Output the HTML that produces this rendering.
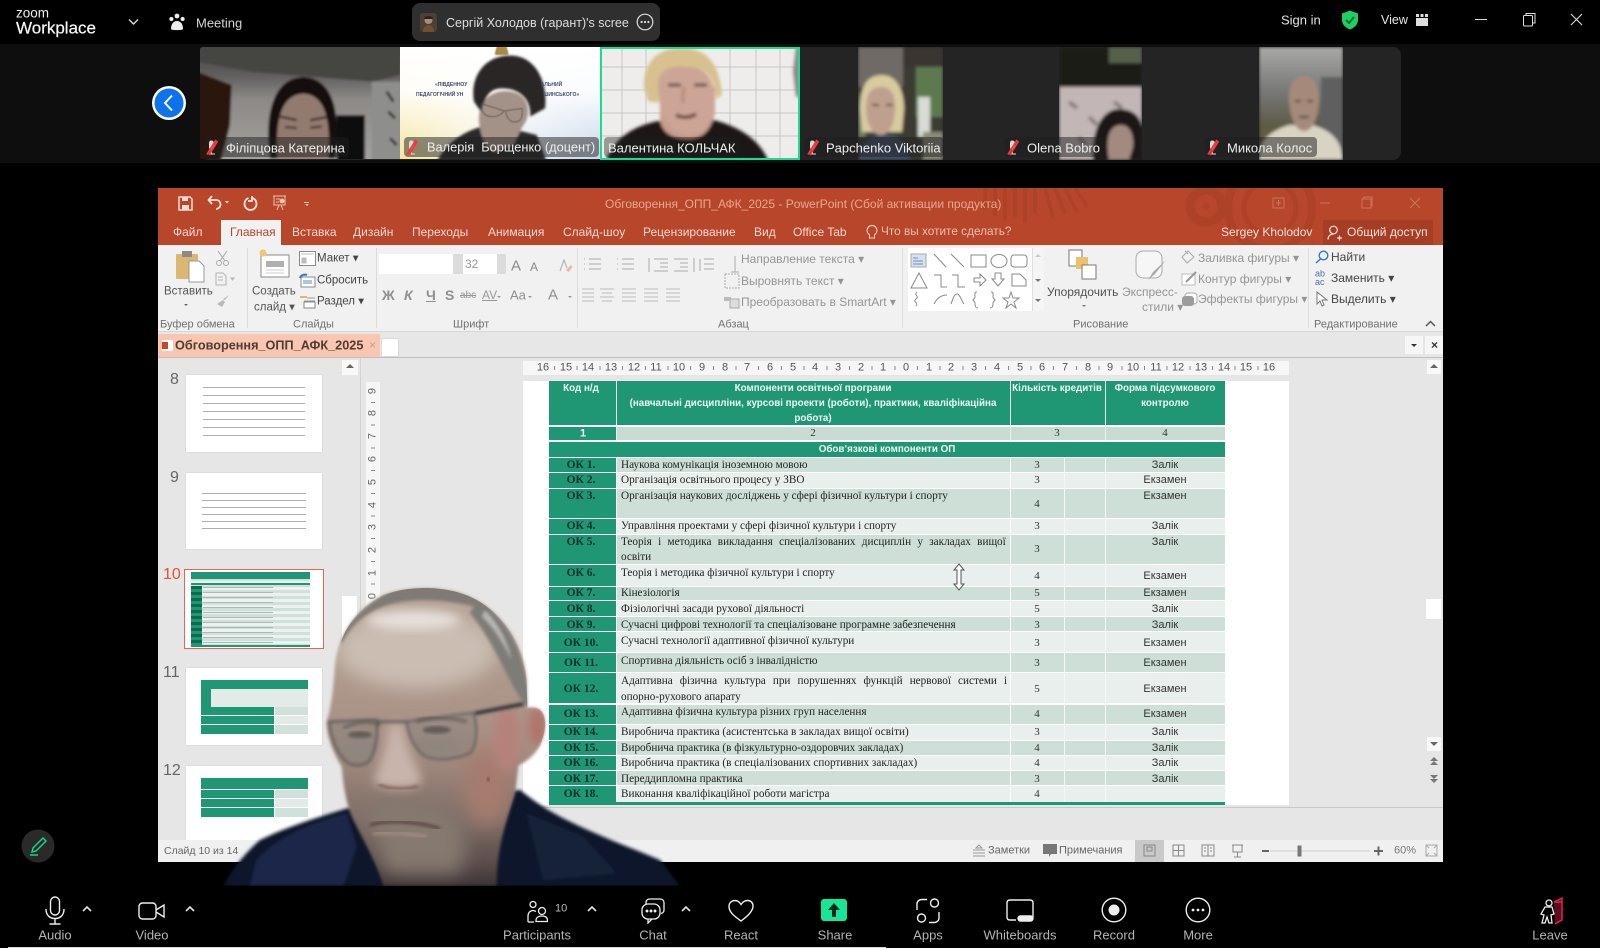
<!DOCTYPE html>
<html lang="uk"><head><meta charset="utf-8"><title>Zoom Workplace</title>
<style>
html,body{margin:0;padding:0;background:#000;}
body{position:relative;width:1600px;height:948px;overflow:hidden;font-family:"Liberation Sans","Noto Sans CJK SC",sans-serif;color:#fff}
.a,.t,svg.a{position:absolute}
.t{white-space:nowrap;line-height:1;transform:translateY(-50%)}
.c{transform:translate(-50%,-50%)}
.tl{font-size:13px;color:#eee}
.lb{position:absolute;top:137px;height:20px;background:rgba(30,30,30,.5);border-radius:4px}
.tb{font-size:13px;color:#b4b4b4;top:935px}
.rt{font-size:12px;color:#959595}
.gl{font-size:11px;color:#707070;top:325px}
.dk{color:#444}
.r{position:absolute;left:549px;width:676px}
.cd{position:absolute;left:0;top:0;bottom:0;width:67px;background:#1f9775}
.x{font:11.2px/1 "Liberation Serif",serif;color:#222;position:absolute;white-space:nowrap;transform:translateY(-45%)}
.o{font:bold 11.5px/1 "Liberation Serif",serif;color:#10302a;position:absolute;white-space:nowrap;transform:translate(-50%,-45%);left:581px}
.n{font:11px/1 "Liberation Serif",serif;color:#333;position:absolute;left:1037px;transform:translate(-50%,-45%)}
.f{font:11px/1 "Liberation Sans",sans-serif;color:#333;position:absolute;left:1165px;transform:translate(-50%,-45%)}
.h{font:bold 9.8px/1 "Liberation Sans",sans-serif;color:#eef7f3;position:absolute;white-space:nowrap;transform:translate(-50%,-40%)}
.rn{position:absolute;top:368px;font-size:11px;color:#555;transform:translate(-50%,-50%);line-height:1}
.vn{position:absolute;left:373px;font-size:11px;color:#666;transform:translate(-50%,-50%) rotate(-90deg);line-height:1}
.num{position:absolute;font-size:16px;color:#666;line-height:1}
.th{position:absolute;background:#fff;left:186px;width:136px;box-shadow:0 0 1px #bbb}
.ln{position:absolute;background:repeating-linear-gradient(#9a9a9a 0 1px,transparent 1px 8px);opacity:.8}
</style></head><body>

<!-- strip background -->
<div class="a" style="left:0;top:44px;width:1600px;height:119px;background:#0e0e0e"></div>
<div class="a" style="left:200px;top:47px;width:1201px;height:113px;background:#242424;border-radius:8px"></div>

<!-- top bar -->
<div class="t" style="left:16px;top:13px;font-size:13.500px;color:#eee">zoom</div>
<div class="t" style="left:16px;top:28px;font-size:17px;color:#f8f8f8;-webkit-text-stroke:.2px #f8f8f8">Workplace</div>
<svg class="a" style="left:128px;top:18px" width="11" height="8" viewBox="0 0 11 8"><path d="M1 1.500 5.500 6 10 1.500" fill="none" stroke="#ddd" stroke-width="1.400"/></svg>
<svg class="a" style="left:168px;top:13px" width="18" height="18" viewBox="0 0 18 18" fill="#eee"><circle cx="9" cy="3" r="2.400"/><circle cx="3.400" cy="6" r="2.100"/><circle cx="14.600" cy="6" r="2.100"/><path d="M3 16c0-5 2.500-8 6-8s6 3 6 8c0 1.500-12 1.500-12 0z"/></svg>
<div class="t" style="left:196px;top:22.500px;font-size:13px;color:#d4d4d4">Meeting</div>
<div class="a" style="left:412px;top:3px;width:248px;height:38px;background:#2f2f2f;border-radius:8px"></div>
<svg class="a" style="left:420px;top:13px" width="17" height="19" viewBox="0 0 17 19"><rect width="17" height="19" rx="3" fill="#4a4038"/><circle cx="8.500" cy="7" r="4" fill="#b08a70"/><path d="M3 19c0-5 3-7 5.500-7s5.500 2 5.500 7z" fill="#75502f"/><path d="M4 6c0-4 9-4 9 0z" fill="#2b2320"/></svg>
<div class="a" style="left:446px;top:10px;width:183px;height:24px;overflow:hidden"><div class="t" style="left:0;top:12.500px;font-size:12.500px;color:#ddd">Сергій Холодов (гарант)'s screen</div></div>
<svg class="a" style="left:636px;top:13px" width="18" height="18" viewBox="0 0 18 18"><circle cx="9" cy="9" r="7.800" fill="none" stroke="#ddd" stroke-width="1.200"/><circle cx="5.600" cy="9" r="1.100" fill="#ddd"/><circle cx="9" cy="9" r="1.100" fill="#ddd"/><circle cx="12.400" cy="9" r="1.100" fill="#ddd"/></svg>
<div class="t" style="left:1281px;top:20px;font-size:13px;color:#e4e4e4">Sign in</div>
<svg class="a" style="left:1341px;top:10px" width="18" height="20" viewBox="0 0 18 20"><path d="M9 .5 17 3.500V10c0 4.500-3.500 7.800-8 9.500C4.500 17.800 1 14.500 1 10V3.500z" fill="#1fd060"/><path d="M5 10l3 3 5-6" fill="none" stroke="#063" stroke-width="1.800"/></svg>
<div class="t" style="left:1381px;top:20px;font-size:12.500px;color:#e4e4e4">View</div>
<svg class="a" style="left:1416px;top:14px" width="12" height="12" viewBox="0 0 12 12" fill="#ddd"><rect y="4" width="12" height="8"/><rect width="3" height="3"/><rect x="4.500" width="3" height="3"/><rect x="9" width="3" height="3"/></svg>
<div class="a" style="left:1475px;top:19px;width:12px;height:1px;background:#ddd"></div>
<svg class="a" style="left:1522px;top:12px" width="15" height="15" viewBox="0 0 15 15" fill="none" stroke="#ddd"><rect x="1.500" y="3.500" width="9" height="10.500" rx="1"/><path d="M4 3V1.500h9V11h-2.500"/></svg>
<svg class="a" style="left:1570px;top:13px" width="13" height="13" viewBox="0 0 13 13" stroke="#ddd" stroke-width="1.100"><path d="M1 1 12 12M12 1 1 12"/></svg>

<!-- back -->
<svg class="a" style="left:151px;top:85px" width="36" height="36" viewBox="0 0 36 36"><circle cx="18" cy="18" r="17" fill="#fff"/><circle cx="18" cy="18" r="14.500" fill="#0e72ed"/><path d="M21 10.500 14 18l7 7.500" fill="none" stroke="#fff" stroke-width="2"/></svg>

<!-- tiles 1 & 2 -->
<svg class="a" style="left:200px;top:45px" width="400" height="118" viewBox="0 0 1200 354">
<defs>
<filter id="b" x="-10%" y="-10%" width="120%" height="120%"><feGaussianBlur stdDeviation="4"/></filter>
<filter id="bs" x="-20%" y="-20%" width="140%" height="140%"><feGaussianBlur stdDeviation="1.500"/></filter>
<linearGradient id="w1" x1="0" x2="0" y1="0" y2="1"><stop offset="0" stop-color="#454443"/><stop offset=".25" stop-color="#605e5d"/><stop offset=".45" stop-color="#8c8986"/><stop offset="1" stop-color="#a5a3a0"/></linearGradient>
<linearGradient id="yb" x1="0" x2="1" y1="0" y2="0"><stop offset="0" stop-color="#f6e49b"/><stop offset=".4" stop-color="#f5f2dc"/><stop offset=".7" stop-color="#dfe7f2"/><stop offset="1" stop-color="#c9d6ea"/></linearGradient>
<linearGradient id="fd" x1="0" x2="0" y1="0" y2="1"><stop offset="0" stop-color="#fff" stop-opacity="1"/><stop offset=".4" stop-color="#fff" stop-opacity=".9"/><stop offset="1" stop-color="#fff" stop-opacity="0"/></linearGradient>
<clipPath id="c1"><path d="M8 6H600V342H0V14a8 8 0 0 1 8-8z"/></clipPath>
<clipPath id="c2"><rect x="600" y="6" width="600" height="336"/></clipPath>
</defs>
<g clip-path="url(#c1)"><g filter="url(#b)">
<rect x="-10" y="0" width="620" height="360" fill="url(#w1)"/>
<path d="M-10 50 150 80 520 110 600 90V0H-10z" fill="#454443"/>
<path d="M-10 80 95 120 90 240 60 360H-10z" fill="#2a140f"/>
<rect x="410" y="210" width="85" height="140" fill="#100c0c"/>
<rect x="515" y="110" width="90" height="240" fill="#8e8e8d"/>
<path d="M560 140l20 30M565 200l20 20M570 280l20 20" stroke="#2a2a2a" stroke-width="8"/>
<path d="M210 340C195 240 205 100 310 96 415 100 420 240 405 340z" fill="#17110f"/>
<path d="M232 345C226 230 240 150 310 146 382 150 392 240 385 345z" fill="#927a70"/>
<path d="M240 215l50 10M330 226l50-10" stroke="#3a2a27" stroke-width="7"/>
<path d="M255 246l35 3M330 248l35-3" stroke="#342623" stroke-width="6"/>
</g></g>
<g clip-path="url(#c2)">
<rect x="600" y="6" width="600" height="340" fill="url(#yb)"/>
<rect x="600" y="6" width="600" height="340" fill="url(#fd)"/>
<g filter="url(#b)">
<path d="M710 350C740 290 810 240 890 240L1010 270 1040 350z" fill="#2b2a2c"/>
<path d="M838 240C828 160 885 130 935 140 990 150 995 210 970 240L940 300 885 320C855 310 845 280 838 240z" fill="#a49289"/>
<path d="M822 170C808 90 860 30 930 32 1005 30 1045 110 1035 190L990 215C995 170 965 130 905 130 865 130 855 160 843 200z" fill="#2c2826"/>
</g>
<path d="M842 175 912 198 968 190M842 175c0 25 12 40 35 40s33-15 35-15M917 200c5 25 18 35 35 30s15-30 15-40" fill="none" stroke="#4e4a48" stroke-width="3" opacity=".7" filter="url(#bs)"/>
<path d="M885 30c0-15 5-20 5-25h30c0 5 5 10 5 25z" fill="#a88a45" filter="url(#bs)"/>
</g>
<text x="705" y="123" font-family="Liberation Sans" font-size="15" font-weight="bold" fill="#3a4d73">«ПІВДЕННОУ</text>
<text x="1022" y="123" font-family="Liberation Sans" font-size="15" font-weight="bold" fill="#3a4d73">АЛЬНИЙ</text>
<text x="648" y="153" font-family="Liberation Sans" font-size="15" font-weight="bold" fill="#3a4d73">ПЕДАГОГІЧНИЙ УН</text>
<text x="1030" y="153" font-family="Liberation Sans" font-size="15" font-weight="bold" fill="#3a4d73">ШИНСЬКОГО»</text>
</svg>

<!-- tile 3 -->
<svg class="a" style="left:600px;top:47px" width="200" height="113" viewBox="0 0 200 113">
<rect width="200" height="113" fill="#efedeb"/>
<path d="M0 20H200M0 43H200M0 66H200M0 89H200M22 0V113M46 0V113M130 0V113M156 0V113M180 0V113" stroke="#a9a6a5" stroke-width="1" opacity=".55" fill="none"/>
<g filter="url(#bs)">
<path d="M196 0h4v50h-4l-3-26z" fill="#888"/>
<path d="M6 113C15 92 30 80 58 74L110 72C135 78 158 90 168 113z" fill="#1c1718"/>
<path d="M60 70C60 85 72 92 88 92 105 92 112 80 115 65V40H60z" fill="#c89d8e"/>
<path d="M44 40C44 10 62 1 82 1 105 1 120 15 122 48L116 52C116 30 105 18 84 22 68 24 60 38 58 56L48 54z" fill="#d8c18f"/>
<path d="M58 38C58 22 72 18 88 20 105 20 116 32 115 56 114 78 102 88 88 88 72 88 58 72 58 38z" fill="#cca596"/>
<path d="M68 38h13M94 38h13" stroke="#5e4540" stroke-width="3"/>
<path d="M84 40c-1 8-2 12-1 16" stroke="#a87d70" stroke-width="2" fill="none"/>
<path d="M76 68c6 3 14 3 20-1" stroke="#6b403c" stroke-width="3.500" fill="none"/>
</g>
<rect x="1" y="1" width="198" height="111" fill="none" stroke="#18dc91" stroke-width="2"/>
</svg>

<!-- tile 4,5,6 photos -->
<svg class="a" style="left:858px;top:47px" width="85" height="113" viewBox="0 0 85 113">
<g filter="url(#bs)">
<rect width="85" height="113" fill="#3a3a30"/>
<rect width="45" height="40" fill="#6f6b66"/>
<rect x="45" width="40" height="20" fill="#3a3430"/>
<rect x="58" y="20" width="27" height="50" fill="#5d7a50"/>
<rect x="60" y="50" width="12" height="40" fill="#d8dcd4"/>
<rect x="65" y="85" width="20" height="28" fill="#8c8a7a"/>
<path d="M0 40 8 90H0z" fill="#6c7f6a"/>
<path d="M1 113C2 95 10 90 24 88L34 88C44 92 50 98 52 113z" fill="#425068"/>
<path d="M2 62C2 35 12 28 24 28 38 28 46 42 46 62L44 85H4z" fill="#d8cb9e"/>
<path d="M8 62C8 45 14 40 24 40 34 40 38 50 37 64 36 80 30 88 23 88 14 88 8 76 8 62z" fill="#bfa08e"/>
<path d="M14 58h7M28 58h7" stroke="#4d3a35" stroke-width="2"/>
</g></svg>
<svg class="a" style="left:1059px;top:47px" width="83" height="113" viewBox="0 0 83 113">
<g filter="url(#bs)">
<rect width="83" height="113" fill="#c2b6b6"/>
<rect width="83" height="40" fill="#1c1a14"/>
<rect x="50" width="33" height="16" fill="#55604c"/>
<path d="M10 55l8 6M30 70l8 8M55 55l8 6M20 90l6 8" stroke="#8d7e80" stroke-width="4"/>
<path d="M34 113C32 80 45 62 60 62 76 62 83 72 83 82V113z" fill="#1a1412"/>
<path d="M50 113C46 92 50 78 62 78 72 78 75 90 74 100L70 113z" fill="#a28a80"/>
</g></svg>
<svg class="a" style="left:1259px;top:47px" width="84" height="113" viewBox="0 0 84 113">
<defs><linearGradient id="w6" x1="0" x2="0" y1="0" y2="1"><stop offset="0" stop-color="#a8a8a6"/><stop offset=".4" stop-color="#777"/><stop offset=".7" stop-color="#5d5a44"/><stop offset="1" stop-color="#6a6230"/></linearGradient></defs>
<g filter="url(#bs)">
<rect width="84" height="113" fill="url(#w6)"/>
<rect x="62" y="30" width="22" height="83" fill="#5f5f5f"/>
<path d="M0 113C0 92 12 84 30 78L54 78C72 84 82 92 84 113z" fill="#d8d3c2"/>
<path d="M30 50C30 35 38 29 45 29 54 29 60 36 60 50 60 70 54 84 45 84 36 84 30 68 30 50z" fill="#a58a7c"/>
<path d="M36 54h6M48 54h6M40 70h10" stroke="#3f2f2b" stroke-width="2"/>
</g></svg>

<!-- labels -->
<div class="lb" style="left:204px;width:145px"></div>
<div class="lb" style="left:404px;width:195px"></div>
<div class="lb" style="left:604px;width:135px;background:rgba(30,30,30,.4)"></div>
<div class="lb" style="left:804px;width:140px"></div>
<div class="lb" style="left:1005px;width:100px"></div>
<div class="lb" style="left:1205px;width:112px"></div>
<svg width="0" height="0" style="position:absolute"><defs><g id="mm"><path d="M5 1.500C3.500 1.500 3 3 3 4.500V8c0 2 1 3 2.500 3S8 10 8 8V4.500C8 3 7 1.500 5.500 1.500z" fill="#d8d8d8"/><path d="M3 15h6M5.500 11v4" stroke="#ddd"/><path d="M1 15.500 10 1M3 16 11.500 2" stroke="#ee3a3a" stroke-width="1.700"/></g></defs></svg>
<svg class="a" style="left:206px;top:139px" width="13" height="17"><use href="#mm"/></svg>
<svg class="a" style="left:406px;top:139px" width="13" height="17"><use href="#mm"/></svg>
<svg class="a" style="left:807px;top:139px" width="13" height="17"><use href="#mm"/></svg>
<svg class="a" style="left:1007px;top:139px" width="13" height="17"><use href="#mm"/></svg>
<svg class="a" style="left:1207px;top:139px" width="13" height="17"><use href="#mm"/></svg>
<div class="t tl" style="left:226px;top:148px">Філіпцова Катерина</div>
<div class="t tl" style="left:427px;top:148px;font-size:12.800px">Валерія&nbsp; Борщенко (доцент)</div>
<div class="t tl" style="left:608px;top:148px">Валентина КОЛЬЧАК</div>
<div class="t tl" style="left:826px;top:148px">Papchenko Viktoriia</div>
<div class="t tl" style="left:1027px;top:148px">Olena Bobro</div>
<div class="t tl" style="left:1227px;top:148px">Микола Колос</div>

<!-- PowerPoint window -->
<div class="a" style="left:158px;top:188px;width:1285px;height:674px;background:#e6e6e6"></div>
<div class="a" style="left:158px;top:188px;width:1285px;height:57px;background:#b8462a"></div>
<svg class="a" style="left:980px;top:188px" width="463" height="57" viewBox="0 0 463 57" fill="none" stroke="#ad4227">
<circle cx="226" cy="18" r="16" stroke-width="9"/><circle cx="226" cy="18" r="3" fill="#ad4227"/><circle cx="290" cy="20" r="42" stroke-width="8"/><circle cx="290" cy="20" r="26" stroke-width="5"/><path d="M5 0V22M15 0V28M25 0V32M35 0V30M45 0V34M55 0V26M65 0l8 30M75 0l10 26M85 0l12 24M95 0l12 18" stroke-width="4"/>
</svg>
<!-- qat -->
<svg class="a" style="left:178px;top:196px" width="15" height="15" viewBox="0 0 15 15"><path d="M1 1h11l2 2v11H1z" fill="none" stroke="#f3dcd3" stroke-width="1.500"/><rect x="4" y="1" width="6" height="4" fill="#f3dcd3"/><rect x="4" y="9" width="7" height="5" fill="#f3dcd3"/></svg>
<svg class="a" style="left:207px;top:195px" width="26" height="16" viewBox="0 0 26 16" fill="none" stroke="#f6e4dc" stroke-width="1.800"><path d="M5 1 1.500 5 5 9M2 5h7c3 0 4.500 2 4.500 4.500S11 14 9 14"/><path d="M18 6h4l-2 2.500z" fill="#f6e4dc" stroke="none"/></svg>
<svg class="a" style="left:243px;top:195px" width="15" height="16" viewBox="0 0 15 16" fill="none" stroke="#f6e4dc" stroke-width="1.800"><path d="M5.500 3C3 4 1.500 6 1.500 9a6 6 0 0 0 12 0c0-3-1.500-5-4-6M9 1v5h-4"/></svg>
<svg class="a" style="left:272px;top:195px" width="16" height="16" viewBox="0 0 16 16" fill="none" stroke="#e9c3b3"><path d="M1 1h13M2 1v9h11V1M7 10l-2 5M9 10l2 5M4 4h4M4 7h3"/><circle cx="10" cy="6" r="2" fill="#e9c3b3"/></svg>
<div class="a" style="left:304px;top:202px;width:5px;height:1px;background:#ecc9bb"></div>
<div class="a" style="left:305px;top:204px;border:2.500px solid transparent;border-top-color:#ecc9bb;border-bottom:0"></div>
<div class="t" style="left:605px;top:203.500px;font-size:12px;color:#e6a88f">Обговорення_ОПП_АФК_2025 - PowerPoint (Сбой активации продукта)</div>
<svg class="a" style="left:1272px;top:196px" width="150" height="14" viewBox="0 0 150 14" fill="none" stroke="#c9765e"><rect x="1" y="2" width="11" height="10"/><path d="M4 7h5M6.500 4v6"/><path d="M48 7h10"/><rect x="90" y="3" width="9" height="9"/><path d="M92 3V1h8v9h-1"/><path d="M138 2l10 10M148 2l-10 10"/></svg>
<!-- tabs -->
<div class="a" style="left:221px;top:220px;width:60px;height:25px;background:#f1f1f1"></div>
<div class="t" style="left:173px;top:232px;font-size:12px;color:#f3d9cf">Файл</div>
<div class="t" style="left:230px;top:232px;font-size:12px;color:#b8462a">Главная</div>
<div class="t" style="left:292px;top:232px;font-size:12px;color:#f3d9cf">Вставка</div>
<div class="t" style="left:353px;top:232px;font-size:12px;color:#f3d9cf">Дизайн</div>
<div class="t" style="left:412px;top:232px;font-size:12px;color:#f3d9cf">Переходы</div>
<div class="t" style="left:488px;top:232px;font-size:12px;color:#f3d9cf">Анимация</div>
<div class="t" style="left:563px;top:232px;font-size:12px;color:#f3d9cf">Слайд-шоу</div>
<div class="t" style="left:643px;top:232px;font-size:12px;color:#f3d9cf">Рецензирование</div>
<div class="t" style="left:754px;top:232px;font-size:12px;color:#f3d9cf">Вид</div>
<div class="t" style="left:793px;top:232px;font-size:12px;color:#f3d9cf">Office Tab</div>
<svg class="a" style="left:866px;top:225px" width="12" height="15" viewBox="0 0 12 15" fill="none" stroke="#f3d9cf"><path d="M3.500 10C2 8.500 1 7.500 1 5.500a5 5 0 0 1 10 0c0 2-1 3-2.500 4.500V13h-5z"/></svg>
<div class="t" style="left:881px;top:232px;font-size:11.800px;color:#ebbfae">Что вы хотите сделать?</div>
<div class="t" style="left:1221px;top:232px;font-size:12px;color:#f6e2da">Sergey Kholodov</div>
<div class="a" style="left:1323px;top:220px;width:110px;height:25px;background:#a63e25"></div>
<svg class="a" style="left:1327px;top:225px" width="16" height="16" viewBox="0 0 16 16" fill="none" stroke="#f6e2da" stroke-width="1.200"><circle cx="6.500" cy="5" r="3.800"/><path d="M1 14.500c0-3 2-5.500 5.500-5.500M10 13h5M12.500 10.500v5"/></svg>
<div class="t" style="left:1347px;top:232px;font-size:12px;color:#f6e2da">Общий доступ</div>

<!-- ribbon -->
<div class="a" style="left:158px;top:245px;width:1285px;height:87px;background:#f1f1f1;border-bottom:1px solid #d8d8d8;box-sizing:border-box"></div>
<div class="a" style="left:247px;top:248px;width:1px;height:80px;background:#dcdcdc"></div>
<div class="a" style="left:376px;top:248px;width:1px;height:80px;background:#dcdcdc"></div>
<div class="a" style="left:577px;top:248px;width:1px;height:80px;background:#dcdcdc"></div>
<div class="a" style="left:902px;top:248px;width:1px;height:80px;background:#dcdcdc"></div>
<div class="a" style="left:1308px;top:248px;width:1px;height:80px;background:#dcdcdc"></div>
<!-- clipboard -->
<svg class="a" style="left:175px;top:249px" width="32" height="34" viewBox="0 0 32 34"><rect x="1" y="5" width="22" height="25" rx="1" fill="#dcb771"/><rect x="7" y="2" width="10" height="6" fill="#8a8a8a"/><path d="M14 12h10l5 5v16H14z" fill="#fff" stroke="#999"/></svg>
<svg class="a" style="left:215px;top:250px" width="15" height="16" viewBox="0 0 15 16" fill="none" stroke="#aaa"><circle cx="4" cy="13" r="2.500"/><circle cx="11" cy="13" r="2.500"/><path d="M5 11 12 1M10 11 3 1"/></svg>
<svg class="a" style="left:215px;top:272px" width="20" height="14" viewBox="0 0 20 14" fill="none" stroke="#b4b4b4"><path d="M1 1h7l3 3v9H1zM3 5h5M3 8h5"/><path d="M16 6h3l-1.500 2z" fill="#b4b4b4"/></svg>
<svg class="a" style="left:216px;top:294px" width="14" height="14" viewBox="0 0 14 14" fill="#bbb"><path d="M13 1 9 6l-2-1zM7 6l2 2-3 5-5-3z"/></svg>
<div class="t" style="left:164px;top:292px;font-size:11.500px;color:#555">Вставить</div>
<div class="a" style="left:184px;top:304px;border:2.500px solid transparent;border-top-color:#666"></div>
<!-- new slide -->
<svg class="a" style="left:258px;top:248px" width="32" height="30" viewBox="0 0 32 30"><rect x="3" y="7" width="28" height="22" fill="#fff" stroke="#8a8a8a"/><rect x="8" y="13" width="18" height="6" fill="#b0b0b0"/><path d="M8 22h18M8 25h18" stroke="#ccc"/><circle cx="5" cy="5" r="3.500" fill="#f3c76a"/></svg>
<div class="t" style="left:252px;top:292px;font-size:11.500px;color:#555">Создать</div>
<div class="t" style="left:254px;top:308px;font-size:11.500px;color:#555">слайд ▾</div>
<svg class="a" style="left:299px;top:251px" width="17" height="15" viewBox="0 0 17 15" fill="#fff" stroke="#8a8a8a"><rect x=".500" y=".500" width="16" height="14"/><path d="M2.500 3h12M3 7h4v5H3z" fill="#bbb" stroke="#bbb"/></svg>
<svg class="a" style="left:299px;top:273px" width="17" height="15" viewBox="0 0 17 15"><rect x="2" y="4" width="14" height="10" fill="#fff" stroke="#8a8a8a"/><path d="M1 5c1-3 4-4 7-3" stroke="#2f78c4" stroke-width="2" fill="none"/><rect x="4" y="7" width="9" height="4" fill="#a9c7e3"/></svg>
<svg class="a" style="left:299px;top:294px" width="17" height="15" viewBox="0 0 17 15" fill="none"><path d="M1 3h7" stroke="#e4b668" stroke-width="2"/><path d="M8 4h8M5 7h11" stroke="#999"/><rect x="5" y="8" width="11" height="6" fill="#fff" stroke="#888"/></svg>
<div class="t dk" style="left:317px;top:259px;font-size:11.500px">Макет ▾</div>
<div class="t dk" style="left:317px;top:281px;font-size:11.500px">Сбросить</div>
<div class="t dk" style="left:317px;top:302px;font-size:11.500px">Раздел ▾</div>
<!-- font -->
<div class="a" style="left:379px;top:254px;width:74px;height:20px;background:#fff"></div>
<div class="a" style="left:453px;top:254px;width:10px;height:20px;background:#dcdcdc"></div>
<div class="a" style="left:463px;top:254px;width:34px;height:20px;background:#fff"></div>
<div class="a" style="left:497px;top:254px;width:9px;height:20px;background:#dcdcdc"></div>
<div class="t rt" style="left:465px;top:264px;font-size:12px">32</div>
<div class="t" style="left:511px;top:266px;font-size:15px;color:#8a8a8a">A</div>
<div class="t" style="left:530px;top:267px;font-size:12px;color:#8a8a8a">A</div>
<svg class="a" style="left:559px;top:258px" width="14" height="15" viewBox="0 0 14 15"><path d="M1 13 5 2l3 8" fill="none" stroke="#aaa"/><path d="M7 12l5-5 1.500 2-4 5z" fill="#e3b9a9"/></svg>
<div class="t" style="left:382px;top:295px;font:bold 14px 'Liberation Sans';color:#8f8f8f">Ж</div>
<div class="t" style="left:404px;top:295px;font:italic bold 14px 'Liberation Sans';color:#8f8f8f">К</div>
<div class="t" style="left:426px;top:295px;font:bold 14px 'Liberation Sans';color:#8f8f8f;text-decoration:underline">Ч</div>
<div class="t" style="left:445px;top:295px;font:bold 14px 'Liberation Sans';color:#8f8f8f">S</div>
<div class="t" style="left:460px;top:296px;font-size:10px;color:#999;text-decoration:line-through">abc</div>
<div class="t" style="left:482px;top:295px;font-size:12px;color:#999;text-decoration:underline">AV</div>
<div class="a" style="left:497px;top:296px;border:2px solid transparent;border-top-color:#999"></div>
<div class="t" style="left:510px;top:295px;font-size:13px;color:#8f8f8f">Aa</div>
<div class="a" style="left:528px;top:296px;border:2px solid transparent;border-top-color:#999"></div>
<div class="t" style="left:548px;top:295px;font-size:15px;color:#8f8f8f">A</div>
<div class="a" style="left:568px;top:296px;border:2px solid transparent;border-top-color:#999"></div>
<!-- paragraph -->
<svg class="a" style="left:582px;top:256px" width="158" height="48" viewBox="0 0 158 48" fill="none" stroke="#aaa"><path d="M2 3h1M7 3h12M2 8h1M7 8h12M2 13h1M7 13h12M35 3h1M40 3h12M35 8h1M40 8h12M35 13h1M40 13h12M67 2V16M72 3h14M78 7h8M78 11h8M72 15h14M92 3h14M98 7h8M98 11h8M92 15h14M112 2V16M122 3h10M122 8h10M122 13h10M118 3v12"/><path d="M-2 37h14M-2 41h14M-2 45h14M-2 33h14M18 33h14M20 37h10M18 41h14M20 45h10M40 33h14M40 37h14M40 41h14M40 45h14M62 33h14M62 37h14M62 41h14M62 45h14M84 33h14M84 37h14M84 41h14M84 45h14" stroke="#bbb"/><path d="M153 0v16M149 16h8" stroke="#aaa"/></svg>
<div class="t rt" style="left:741px;top:259px">Направление текста ▾</div>
<div class="t rt" style="left:741px;top:281px">Выровнять текст ▾</div>
<div class="t rt" style="left:741px;top:302px">Преобразовать в SmartArt ▾</div>
<svg class="a" style="left:724px;top:273px" width="16" height="16" viewBox="0 0 16 16" fill="none" stroke="#aaa" stroke-dasharray="2 1"><rect x="1" y="1" width="14" height="14"/></svg>
<svg class="a" style="left:723px;top:295px" width="17" height="14" viewBox="0 0 17 14" fill="#bbb"><rect x="7" y="4" width="9" height="9" fill="#ddd" stroke="#aaa"/><path d="M1 2h7v4H1z"/></svg>
<!-- gallery -->
<div class="a" style="left:908px;top:248px;width:135px;height:63px;background:#fff;border:0 solid #ddd"></div>
<svg class="a" style="left:908px;top:248px" width="135" height="63" viewBox="0 0 135 63" fill="none" stroke="#888">
<rect x="3" y="6" width="15" height="13" fill="#d7e1ef" stroke="#aaa"/><path d="M5 10h5M5 13h10M5 16h10" stroke="#6c8fb7"/>
<path d="M26 6 38 19M43 6l13 13" /><rect x="63" y="7" width="15" height="12"/><ellipse cx="91" cy="13" rx="8" ry="6.500"/><rect x="103" y="7" width="16" height="12" rx="3"/>
<path d="M11 25 3 40H19zM26 27h7v12h6M44 27h6v12h7M66 30h6v-4l6 6-6 6v-4h-6zM87 25h6v6h3l-6 7-6-7h3zM104 38V26h8l6 6v6z"/>
<path d="M9 44c-4 3 3 4-1 7s3 3 0 7M26 56c3-6 7-9 13-9M43 56c2-5 3-10 6-10s4 6 7 10M69 44c-3 0-2 3-2 5s-2 2-2 3 2 1 2 3 0 5 3 5M83 44c3 0 2 3 2 5s2 2 2 3-2 1-2 3 0 5-3 5M103 44l2 6h6l-5 4 2 6-5-4-5 4 2-6-5-4h6z"/>
</svg>
<div class="a" style="left:1032px;top:248px;width:11px;height:63px;background:#f5f5f5;border-left:1px solid #e0e0e0"></div>
<div class="a" style="left:1035px;top:254px;border:3px solid transparent;border-bottom-color:#ccc;border-top:0"></div>
<div class="a" style="left:1035px;top:279px;border:3px solid transparent;border-top-color:#777;border-bottom:0"></div>
<div class="a" style="left:1035px;top:299px;border:3px solid transparent;border-top-color:#777;border-bottom:0"></div>
<!-- arrange -->
<svg class="a" style="left:1068px;top:249px" width="30" height="32" viewBox="0 0 30 32"><rect x="1" y="1" width="13" height="16" fill="#fff" stroke="#777"/><rect x="8" y="8" width="12" height="12" fill="#edc06d"/><rect x="14" y="16" width="14" height="14" fill="#fff" stroke="#777"/></svg>
<div class="t" style="left:1047px;top:292px;font-size:12px;color:#505050">Упорядочить</div>
<div class="a" style="left:1082px;top:305px;border:2.500px solid transparent;border-top-color:#777"></div>
<svg class="a" style="left:1135px;top:250px" width="32" height="34" viewBox="0 0 32 34"><rect x="1" y="1" width="26" height="27" rx="7" fill="#f6f6f6" stroke="#aaa"/><path d="M31 10 20 24l-7 6 5-8z" fill="#aaa"/></svg>
<div class="t rt" style="left:1122px;top:292px">Экспресс-</div>
<div class="t rt" style="left:1142px;top:307px">стили ▾</div>
<svg class="a" style="left:1181px;top:250px" width="17" height="15" viewBox="0 0 17 15" fill="none" stroke="#aaa"><path d="M7 1 1 7l5 6 7-6zM4 1l3 3"/></svg>
<svg class="a" style="left:1181px;top:271px" width="17" height="15" viewBox="0 0 17 15"><rect x="1" y="3" width="13" height="11" fill="#fff" stroke="#bbb"/><path d="M5 11 15 1" stroke="#999" stroke-width="2"/></svg>
<svg class="a" style="left:1181px;top:292px" width="17" height="15" viewBox="0 0 17 15"><rect x="4" y="1" width="12" height="11" rx="3" fill="#fff" stroke="#aaa"/><rect x="1" y="4" width="12" height="10" rx="3" fill="#9c9c9c"/></svg>
<div class="t rt" style="left:1198px;top:258px">Заливка фигуры ▾</div>
<div class="t rt" style="left:1198px;top:279px">Контур фигуры ▾</div>
<div class="t rt" style="left:1198px;top:299px">Эффекты фигуры ▾</div>
<svg class="a" style="left:1315px;top:250px" width="14" height="14" viewBox="0 0 14 14" fill="none" stroke="#2f78c4" stroke-width="1.400"><circle cx="8.500" cy="5.500" r="4.300"/><path d="M5.500 9 1 13"/></svg>
<div class="t" style="left:1315px;top:274px;font:9px 'Liberation Sans';color:#4472a8;line-height:.8">ab</div>
<div class="t" style="left:1315px;top:282px;font:9px 'Liberation Sans';color:#4472a8">ac</div>
<svg class="a" style="left:1316px;top:291px" width="13" height="16" viewBox="0 0 13 16" fill="#fff" stroke="#777"><path d="M1 1v12l3-3 2 5 2-1-2-5h5z"/></svg>
<div class="t dk" style="left:1331px;top:257px;font-size:12px">Найти</div>
<div class="t dk" style="left:1331px;top:278px;font-size:12px">Заменить ▾</div>
<div class="t dk" style="left:1331px;top:299px;font-size:12px">Выделить ▾</div>
<div class="t gl" style="left:160px">Буфер обмена</div>
<div class="t gl" style="left:293px">Слайды</div>
<div class="t gl" style="left:453px">Шрифт</div>
<div class="t gl" style="left:718px">Абзац</div>
<div class="t gl" style="left:1073px">Рисование</div>
<div class="t gl" style="left:1314px">Редактирование</div>
<svg class="a" style="left:1425px;top:320px" width="11" height="8" viewBox="0 0 11 8"><path d="M1 6 5.500 1.500 10 6" fill="none" stroke="#555" stroke-width="1.500"/></svg>

<!-- doc tab -->
<div class="a" style="left:158px;top:332px;width:1285px;height:26px;background:#e7e7e7;border-bottom:1px solid #bfbfbf;box-sizing:border-box"></div>
<div class="a" style="left:158px;top:334px;width:222px;height:23px;background:#f9c7b1"></div>
<svg class="a" style="left:162px;top:340px" width="11" height="11" viewBox="0 0 11 11"><rect width="11" height="11" fill="#fff"/><rect y="2" width="6" height="7" fill="#c8472b"/></svg>
<div class="t" style="left:175px;top:345.500px;font-size:12.700px;font-weight:bold;color:#4e3c34">Обговорення_ОПП_АФК_2025</div>
<div class="t" style="left:369px;top:345px;font-size:12px;color:#c89d8a">×</div>
<div class="a" style="left:381px;top:338px;width:18px;height:19px;background:#fff;border:1px solid #d9d9d9;box-sizing:border-box"></div>
<div class="a" style="left:1405px;top:336px;width:18px;height:18px;background:#f6f6f6"></div>
<div class="a" style="left:1425px;top:336px;width:18px;height:18px;background:#f6f6f6"></div>
<div class="a" style="left:1411px;top:344px;border:3px solid transparent;border-top-color:#333"></div>
<div class="t" style="left:1431px;top:345px;font:bold 12px 'Liberation Sans';color:#333">×</div>

<!-- thumbnail panel -->
<div class="a" style="left:360px;top:358px;width:1px;height:482px;background:#d2d2d2"></div>
<div class="a" style="left:342px;top:360px;width:16px;height:15px;background:#f8f8f8"></div>
<div class="a" style="left:346px;top:364px;border:4px solid transparent;border-bottom-color:#666;border-top:0"></div>
<div class="a" style="left:342px;top:596px;width:15px;height:60px;background:#fff"></div>
<div class="num" style="left:170px;top:372px">8</div>
<div class="num" style="left:170px;top:470px">9</div>
<div class="num" style="left:163px;top:567px;color:#d9553d">10</div>
<div class="num" style="left:163px;top:665px">11</div>
<div class="num" style="left:163px;top:763px">12</div>
<div class="th" style="top:375px;height:77px"><div class="ln" style="left:17px;right:17px;top:12px;height:52px"></div></div>
<div class="th" style="top:473px;height:76px"><div class="ln" style="left:16px;right:16px;top:20px;height:38px;background:repeating-linear-gradient(#9a9a9a 0 1px,transparent 1px 7px)"></div></div>
<div class="a" style="left:184px;top:569px;width:140px;height:80px;background:#fff;border:1.500px solid #e9664a;box-sizing:border-box"></div>
<div class="a" style="left:191px;top:572px;width:119px;height:75px;background:repeating-linear-gradient(#d0e0da 0 3px,#edf2f0 3px 6px)"></div>
<div class="a" style="left:191px;top:572px;width:119px;height:7px;background:#1f9775"></div>
<div class="a" style="left:191px;top:583px;width:119px;height:2px;background:#1f9775"></div>
<div class="a" style="left:191px;top:586px;width:11px;height:61px;background:repeating-linear-gradient(#0f6a50 0 3px,#1f9775 3px 6px)"></div>
<div class="a" style="left:203px;top:587px;width:70px;height:60px;background:repeating-linear-gradient(#a9bbb4 0 1px,transparent 1px 5px)"></div>
<div class="a" style="left:191px;top:645px;width:119px;height:2px;background:#1f9775"></div>
<div class="th" style="top:668px;height:77px">
<div class="a" style="left:15px;top:12px;width:107px;height:9px;background:#1f9775"></div>
<div class="a" style="left:15px;top:21px;width:107px;height:18px;background:#e2ebe7"></div>
<div class="a" style="left:15px;top:21px;width:10px;height:9px;background:#1f9775"></div>
<div class="a" style="left:15px;top:30px;width:10px;height:9px;background:#1f9775"></div>
<div class="a" style="left:15px;top:39px;width:73px;height:8px;background:#1f9775"></div><div class="a" style="left:89px;top:39px;width:33px;height:8px;background:#d0e0da"></div>
<div class="a" style="left:15px;top:48px;width:73px;height:8px;background:#1f9775"></div><div class="a" style="left:89px;top:48px;width:33px;height:8px;background:#e2ebe7"></div>
<div class="a" style="left:15px;top:57px;width:73px;height:9px;background:#1f9775"></div><div class="a" style="left:89px;top:57px;width:33px;height:9px;background:#d0e0da"></div>
</div>
<div class="th" style="top:766px;height:74px">
<div class="a" style="left:15px;top:12px;width:107px;height:11px;background:#1f9775"></div>
<div class="a" style="left:15px;top:24px;width:73px;height:8px;background:#1f9775"></div><div class="a" style="left:89px;top:24px;width:33px;height:8px;background:#d0e0da"></div>
<div class="a" style="left:15px;top:33px;width:73px;height:8px;background:#1f9775"></div><div class="a" style="left:89px;top:33px;width:33px;height:8px;background:#e2ebe7"></div>
<div class="a" style="left:15px;top:42px;width:73px;height:9px;background:#1f9775"></div><div class="a" style="left:89px;top:42px;width:33px;height:9px;background:#d0e0da"></div>
</div>

<!-- rulers -->
<div class="a" style="left:523px;top:361px;width:766px;height:14px;background:#f6f6f6"></div>
<div class="a" style="left:366px;top:382px;width:14px;height:230px;background:#f6f6f6"></div>
<div class="a" style="left:543px;top:366px;width:726px;height:4px;background:repeating-linear-gradient(90deg,transparent 0 11px,#888 11px 12px,transparent 12px 22.690px)"></div>
<div class="a" style="left:371px;top:391px;width:4px;height:205px;background:repeating-linear-gradient(transparent 0 11px,#888 11px 12px,transparent 12px 22.690px)"></div>
<div class="rn" style="left:543px">16</div><div class="rn" style="left:566px">15</div><div class="rn" style="left:588px">14</div><div class="rn" style="left:611px">13</div><div class="rn" style="left:634px">12</div><div class="rn" style="left:656px">11</div><div class="rn" style="left:679px">10</div><div class="rn" style="left:702px">9</div><div class="rn" style="left:725px">8</div><div class="rn" style="left:747px">7</div><div class="rn" style="left:770px">6</div><div class="rn" style="left:793px">5</div><div class="rn" style="left:815px">4</div><div class="rn" style="left:838px">3</div><div class="rn" style="left:861px">2</div><div class="rn" style="left:883px">1</div><div class="rn" style="left:906px">0</div><div class="rn" style="left:929px">1</div><div class="rn" style="left:951px">2</div><div class="rn" style="left:974px">3</div><div class="rn" style="left:997px">4</div><div class="rn" style="left:1020px">5</div><div class="rn" style="left:1042px">6</div><div class="rn" style="left:1065px">7</div><div class="rn" style="left:1088px">8</div><div class="rn" style="left:1110px">9</div><div class="rn" style="left:1133px">10</div><div class="rn" style="left:1156px">11</div><div class="rn" style="left:1178px">12</div><div class="rn" style="left:1201px">13</div><div class="rn" style="left:1224px">14</div><div class="rn" style="left:1246px">15</div><div class="rn" style="left:1269px">16</div>
<div class="vn" style="top:391px">9</div><div class="vn" style="top:413px">8</div><div class="vn" style="top:436px">7</div><div class="vn" style="top:459px">6</div><div class="vn" style="top:482px">5</div><div class="vn" style="top:505px">4</div><div class="vn" style="top:527px">3</div><div class="vn" style="top:550px">2</div><div class="vn" style="top:573px">1</div><div class="vn" style="top:596px">0</div>

<!-- slide -->
<div class="a" style="left:523px;top:381px;width:766px;height:424px;background:#fff"></div>
<div class="a" style="left:361px;top:807px;width:1082px;height:1px;background:#c9c9c9"></div>
<!-- table -->
<div class="r" style="top:381px;height:44px;background:#1f9775"></div>
<div class="r" style="top:427px;height:13px;background:#c9dcd4"><div class="cd"></div></div>
<div class="r" style="top:442px;height:15px;background:#1f9775"></div>
<div class="r" style="top:458px;height:14px;background:#cedfd8"><div class="cd"></div></div>
<div class="r" style="top:473px;height:15px;background:#e8efec"><div class="cd"></div></div>
<div class="r" style="top:489px;height:29px;background:#cedfd8"><div class="cd"></div></div>
<div class="r" style="top:519px;height:15px;background:#e8efec"><div class="cd"></div></div>
<div class="r" style="top:535px;height:29px;background:#cedfd8"><div class="cd"></div></div>
<div class="r" style="top:565px;height:21px;background:#e8efec"><div class="cd"></div></div>
<div class="r" style="top:587px;height:13px;background:#cedfd8"><div class="cd"></div></div>
<div class="r" style="top:601px;height:15px;background:#e8efec"><div class="cd"></div></div>
<div class="r" style="top:617px;height:14px;background:#cedfd8"><div class="cd"></div></div>
<div class="r" style="top:632px;height:20px;background:#e8efec"><div class="cd"></div></div>
<div class="r" style="top:653px;height:19px;background:#cedfd8"><div class="cd"></div></div>
<div class="r" style="top:673px;height:30px;background:#e8efec"><div class="cd"></div></div>
<div class="r" style="top:705px;height:19px;background:#cedfd8"><div class="cd"></div></div>
<div class="r" style="top:725px;height:15px;background:#e8efec"><div class="cd"></div></div>
<div class="r" style="top:741px;height:14px;background:#cedfd8"><div class="cd"></div></div>
<div class="r" style="top:756px;height:14px;background:#e8efec"><div class="cd"></div></div>
<div class="r" style="top:771px;height:14px;background:#cedfd8"><div class="cd"></div></div>
<div class="r" style="top:786px;height:16px;background:#e8efec"><div class="cd"></div></div>
<div class="r" style="top:802px;height:3px;background:#1f9775"></div>
<div class="a" style="left:616px;top:381px;width:1px;height:61px;background:#e9f3ef"></div>
<div class="a" style="left:1010px;top:381px;width:1px;height:61px;background:#e9f3ef"></div>
<div class="a" style="left:1105px;top:381px;width:1px;height:61px;background:#e9f3ef"></div>
<div class="a" style="left:616px;top:458px;width:1px;height:344px;background:#fff"></div>
<div class="a" style="left:1010px;top:458px;width:1px;height:344px;background:#fff"></div>
<div class="a" style="left:1064px;top:458px;width:1px;height:344px;background:#f4f8f6"></div>
<div class="a" style="left:1105px;top:458px;width:1px;height:344px;background:#f4f8f6"></div>
<div class="h" style="left:581px;top:388px">Код н/д</div>
<div class="h" style="left:813px;top:388px">Компоненти освітньої програми</div>
<div class="h" style="left:813px;top:403px">(навчальні дисципліни, курсові проекти (роботи), практики, кваліфікаційна</div>
<div class="h" style="left:813px;top:418px">робота)</div>
<div class="h" style="left:1057px;top:388px">Кількість кредитів</div>
<div class="h" style="left:1165px;top:388px">Форма підсумкового</div>
<div class="h" style="left:1165px;top:403px">контролю</div>
<div class="h" style="left:583px;top:433px;font-size:11px">1</div>
<div class="n" style="left:813px;top:433px">2</div><div class="n" style="left:1057px;top:433px">3</div><div class="n" style="left:1165px;top:433px">4</div>
<div class="h" style="left:887px;top:449px">Обов’язкові компоненти ОП</div>

<div class="o" style="top:465px">ОК 1.</div><div class="x" style="left:621px;top:465px">Наукова комунікація іноземною мовою</div><div class="n" style="top:465px">3</div><div class="f" style="top:465px">Залік</div>
<div class="o" style="top:480px">ОК 2.</div><div class="x" style="left:621px;top:480px">Організація освітнього процесу у ЗВО</div><div class="n" style="top:480px">3</div><div class="f" style="top:480px">Екзамен</div>
<div class="o" style="top:496px">ОК 3.</div><div class="x" style="left:621px;top:496px">Організація наукових досліджень у сфері фізичної культури і спорту</div><div class="n" style="top:504px">4</div><div class="f" style="top:496px">Екзамен</div>
<div class="o" style="top:526px">ОК 4.</div><div class="x" style="left:621px;top:526px">Управління проектами у сфері фізичної культури і спорту</div><div class="n" style="top:526px">3</div><div class="f" style="top:526px">Залік</div>
<div class="o" style="top:542px">ОК 5.</div><div class="x" style="left:621px;top:542px;word-spacing:3.500px">Теорія і методика викладання спеціалізованих дисциплін у закладах вищої</div><div class="x" style="left:621px;top:557px">освіти</div><div class="n" style="top:549px">3</div><div class="f" style="top:542px">Залік</div>
<div class="o" style="top:573px">ОК 6.</div><div class="x" style="left:621px;top:573px">Теорія і методика фізичної культури і спорту</div><div class="n" style="top:576px">4</div><div class="f" style="top:576px">Екзамен</div>
<div class="o" style="top:593px">ОК 7.</div><div class="x" style="left:621px;top:593px">Кінезіологія</div><div class="n" style="top:593px">5</div><div class="f" style="top:593px">Екзамен</div>
<div class="o" style="top:609px">ОК 8.</div><div class="x" style="left:621px;top:609px">Фізіологічні засади рухової діяльності</div><div class="n" style="top:609px">5</div><div class="f" style="top:609px">Залік</div>
<div class="o" style="top:625px">ОК 9.</div><div class="x" style="left:621px;top:625px">Сучасні цифрові технології та спеціалізоване програмне забезпечення</div><div class="n" style="top:625px">3</div><div class="f" style="top:625px">Залік</div>
<div class="o" style="top:643px">ОК 10.</div><div class="x" style="left:621px;top:641px">Сучасні технології адаптивної фізичної культури</div><div class="n" style="top:643px">3</div><div class="f" style="top:643px">Екзамен</div>
<div class="o" style="top:663px">ОК 11.</div><div class="x" style="left:621px;top:661px">Спортивна діяльність осіб з інвалідністю</div><div class="n" style="top:663px">3</div><div class="f" style="top:663px">Екзамен</div>
<div class="o" style="top:689px">ОК 12.</div><div class="x" style="left:621px;top:681px;word-spacing:4.300px">Адаптивна фізична культура при порушеннях функцій нервової системи і</div><div class="x" style="left:621px;top:697px">опорно-рухового апарату</div><div class="n" style="top:689px">5</div><div class="f" style="top:689px">Екзамен</div>
<div class="o" style="top:714px">ОК 13.</div><div class="x" style="left:621px;top:712px">Адаптивна фізична культура різних груп населення</div><div class="n" style="top:714px">4</div><div class="f" style="top:714px">Екзамен</div>
<div class="o" style="top:732px">ОК 14.</div><div class="x" style="left:621px;top:732px">Виробнича практика (асистентська в закладах вищої освіти)</div><div class="n" style="top:732px">3</div><div class="f" style="top:732px">Залік</div>
<div class="o" style="top:748px">ОК 15.</div><div class="x" style="left:621px;top:748px">Виробнича практика (в фізкультурно-оздоровчих закладах)</div><div class="n" style="top:748px">4</div><div class="f" style="top:748px">Залік</div>
<div class="o" style="top:763px">ОК 16.</div><div class="x" style="left:621px;top:763px">Виробнича практика (в спеціалізованих спортивних закладах)</div><div class="n" style="top:763px">4</div><div class="f" style="top:763px">Залік</div>
<div class="o" style="top:779px">ОК 17.</div><div class="x" style="left:621px;top:779px">Переддипломна практика</div><div class="n" style="top:779px">3</div><div class="f" style="top:779px">Залік</div>
<div class="o" style="top:794px">ОК 18.</div><div class="x" style="left:621px;top:794px">Виконання кваліфікаційної роботи магістра</div><div class="n" style="top:794px">4</div>
<!-- text cursor -->
<svg class="a" style="left:953px;top:563px" width="12" height="28" viewBox="0 0 12 28" fill="#fff" stroke="#555"><path d="M6 1 11 7H8v14h3l-5 6-5-6h3V7H1z"/></svg>

<!-- right scrollbar -->
<div class="a" style="left:1427px;top:360px;width:14px;height:14px;background:#f8f8f8"></div>
<div class="a" style="left:1430px;top:364px;border:4px solid transparent;border-bottom-color:#666;border-top:0"></div>
<div class="a" style="left:1426px;top:599px;width:15px;height:20px;background:#fff"></div>
<div class="a" style="left:1427px;top:737px;width:14px;height:14px;background:#f8f8f8"></div>
<div class="a" style="left:1430px;top:742px;border:4px solid transparent;border-top-color:#666;border-bottom:0"></div>
<svg class="a" style="left:1429px;top:756px" width="10" height="28" viewBox="0 0 10 28" fill="#777"><path d="M5 1 9 5H1zM5 5 9 9H1zM1 19h8l-4 4zM1 23h8l-4 4z"/></svg>

<!-- status bar -->
<div class="a" style="left:158px;top:840px;width:1285px;height:22px;background:#f0f0f0"></div>
<div class="a" style="left:1135px;top:840px;width:29px;height:22px;background:#c9c9c9"></div>
<div class="t" style="left:164px;top:851px;font-size:10.500px;color:#666">Слайд 10 из 14</div>
<svg class="a" style="left:972px;top:844px" width="14" height="14" viewBox="0 0 14 14" stroke="#999" fill="none"><path d="M7 1 4 4h6zM1 6h12M1 9h12M1 12h12"/></svg>
<div class="t" style="left:988px;top:851px;font-size:11px;color:#666">Заметки</div>
<svg class="a" style="left:1043px;top:844px" width="14" height="14" viewBox="0 0 14 14" fill="#777"><path d="M0 0h14v10H8l-2 3v-3H0z"/></svg>
<div class="t" style="left:1059px;top:851px;font-size:11px;color:#666">Примечания</div>
<svg class="a" style="left:1142px;top:843px" width="300" height="16" viewBox="0 0 300 16" fill="none" stroke="#888">
<rect x="2" y="2" width="11" height="11"/><rect x="5" y="4" width="5" height="4"/>
<path d="M31 2h11v11H31zM31 7.500h11M36.500 2v11"/>
<path d="M60 2h12v11H60zM66 2v11M62 5h2M62 8h2M68 5h2M68 8h2"/>
<path d="M90 2h11M91 2v7h9V2M95.500 9v5M92 14h7"/>
<path d="M120 8h7" stroke="#666" stroke-width="2"/><path d="M128 8h100" stroke="#ccc"/><rect x="156" y="3" width="3" height="10" fill="#777" stroke="#777"/>
<path d="M232 8h9M236.500 3.500v9" stroke="#666" stroke-width="2"/>
<path d="M284 2h11v11h-11zM284 2l3 3M295 2l-3 3M284 13l3-3M295 13l-3-3" stroke="#aaa"/>
</svg>
<div class="t" style="left:1394px;top:851px;font-size:11px;color:#777">60%</div>

<!-- pen -->
<svg class="a" style="left:21px;top:829px" width="34" height="34" viewBox="0 0 34 34"><circle cx="17" cy="17" r="16.500" fill="#2a2a2a"/><path d="M11 23l1-4 10-10 3 3-10 10zM9 26h8" fill="none" stroke="#18d18b" stroke-width="1.500"/></svg>

<!-- person -->
<svg class="a" style="left:210px;top:580px" width="480" height="310" viewBox="0 0 1440 930">
<defs>
<filter id="p" x="-10%" y="-10%" width="120%" height="120%"><feGaussianBlur stdDeviation="5"/></filter>
<filter id="p2" x="-30%" y="-30%" width="160%" height="160%"><feGaussianBlur stdDeviation="14"/></filter>
<filter id="p3" x="-30%" y="-30%" width="160%" height="160%"><feGaussianBlur stdDeviation="28"/></filter>
<linearGradient id="sk" x1="0" x2="0" y1="0" y2="1"><stop offset="0" stop-color="#b8a698"/><stop offset=".55" stop-color="#a68d82"/><stop offset=".78" stop-color="#7d6c65"/><stop offset=".92" stop-color="#5c4e4c"/><stop offset="1" stop-color="#3d3436"/></linearGradient>
<clipPath id="hd"><path d="M375 260C385 170 430 90 520 45 600 15 720 15 800 60 880 105 940 190 950 300L952 385C985 375 1008 395 1005 440 1000 500 965 540 925 555L915 640C890 720 860 800 860 918H520C500 850 470 800 430 720 410 680 400 620 395 560 370 520 350 470 350 425 365 380 370 320 375 260z"/></clipPath>
</defs>
<g filter="url(#p)">
<path d="M40 918C70 860 110 815 150 780 230 740 330 710 410 685L930 630C980 670 1020 695 1070 720 1170 770 1280 810 1350 840L1410 918z" fill="#11172a"/>
<path d="M140 840C200 770 300 730 410 700L440 800 400 918H120z" fill="#1a2848"/>
<path d="M950 700 1120 770 1220 880 1000 900z" fill="#182438"/>
</g>
<path filter="url(#p)" d="M375 260C385 170 430 90 520 45 600 15 720 15 800 60 880 105 940 190 950 300L952 385C985 375 1008 395 1005 440 1000 500 965 540 925 555L915 640C890 720 860 800 860 918H520C500 850 470 800 430 720 410 680 400 620 395 560 370 520 350 470 350 425 365 380 370 320 375 260z" fill="url(#sk)"/>
<g clip-path="url(#hd)">
<ellipse cx="620" cy="210" rx="240" ry="115" fill="#cbbdb2" filter="url(#p3)"/>
<ellipse cx="610" cy="120" rx="140" ry="28" fill="#e6dfda" filter="url(#p2)"/>
<ellipse cx="830" cy="620" rx="70" ry="120" fill="#a67b6e" filter="url(#p3)"/>
<ellipse cx="890" cy="480" rx="40" ry="100" fill="#b5827a" filter="url(#p2)"/>
<ellipse cx="985" cy="440" rx="28" ry="60" fill="#b0736a" filter="url(#p2)"/>
<!-- hair -->
<path d="M800 60C880 105 950 200 960 390 905 340 860 190 780 100z" fill="#7e7b77" filter="url(#p)"/>
<path d="M825 90C855 120 890 170 905 240 880 190 850 140 815 110z" fill="#b8b6b3" filter="url(#p)"/>
<path d="M385 170C470 60 560 10 640 12 730 8 800 40 860 100 760 62 640 52 560 68 480 85 430 125 395 190z" fill="#7f7a75" filter="url(#p)"/>
<!-- stubble -->
<path d="M460 680C510 650 620 655 710 695 780 730 770 790 750 880H530C510 820 490 760 460 680z" fill="#857970" filter="url(#p3)"/>
<!-- eyes -->
<ellipse cx="450" cy="465" rx="36" ry="11" fill="#403a36" filter="url(#p)"/>
<ellipse cx="680" cy="450" rx="42" ry="12" fill="#4f4744" filter="url(#p)"/>
<ellipse cx="450" cy="510" rx="55" ry="32" fill="#9a8c83" filter="url(#p2)"/>
<ellipse cx="680" cy="500" rx="70" ry="28" fill="#958980" filter="url(#p2)"/>
<path d="M400 445C430 425 480 420 510 435M620 425C660 410 720 410 770 425" stroke="#6a5852" stroke-width="11" fill="none" filter="url(#p)"/>
<!-- nose -->
<path d="M540 430C530 500 505 570 490 600 500 630 570 630 620 620 650 600 620 570 610 540 590 500 580 460 575 430z" fill="#c8b4aa" filter="url(#p2)"/>
<path d="M505 612C530 628 590 632 625 618" stroke="#7b5c55" stroke-width="8" fill="none" filter="url(#p)"/>
<!-- mouth -->
<path d="M480 735C530 720 610 722 690 745" stroke="#4c3534" stroke-width="7" fill="none" filter="url(#p)"/>
<path d="M490 760C540 755 590 760 650 770" stroke="#a08880" stroke-width="12" fill="none" filter="url(#p)"/>
<ellipse cx="835" cy="598" rx="4" ry="6" fill="#4a3532" filter="url(#p)"/>
</g>
<!-- glasses -->
<g filter="url(#p)" opacity=".95">
<path d="M358 425 500 420C505 470 495 530 470 550 430 565 410 550 395 530 380 510 360 470 358 425z" fill="#807e7b" fill-opacity=".45" stroke="#5a5a5a" stroke-width="7"/>
<path d="M590 425 790 398C805 440 800 500 780 520 720 545 660 540 640 525 620 510 595 470 590 425z" fill="#827f7c" fill-opacity=".4" stroke="#5a5a5a" stroke-width="6"/>
<path d="M500 425 590 425" stroke="#555" stroke-width="7"/>
<path d="M795 400 940 372" stroke="#1f2329" stroke-width="10"/>
</g>
</svg>
<div class="a" style="left:0;top:886px;width:1600px;height:62px;background:#000"></div>

<!-- toolbar -->
<svg class="a" style="left:42px;top:896px" width="26" height="30" viewBox="0 0 26 30" fill="none" stroke="#eee" stroke-width="1.400"><rect x="8.500" y="1" width="9" height="18" rx="4.500"/><path d="M4 13c0 6.500 4 9.500 9 9.500s9-3 9-9.500M13 22.500V28M7.500 28h11"/></svg>
<svg class="a" style="left:82px;top:905px" width="10" height="7" viewBox="0 0 10 7"><path d="M1 6 5 2l4 4" fill="none" stroke="#e2e2e2" stroke-width="1.600"/></svg>
<div class="t c tb" style="left:55px">Audio</div>
<svg class="a" style="left:138px;top:901px" width="28" height="20" viewBox="0 0 28 20" fill="none" stroke="#eee" stroke-width="1.400"><rect x="1" y="2" width="17" height="16" rx="3.500"/><path d="M18 9l8-5v12l-8-5"/></svg>
<svg class="a" style="left:185px;top:905px" width="10" height="7" viewBox="0 0 10 7"><path d="M1 6 5 2l4 4" fill="none" stroke="#e2e2e2" stroke-width="1.600"/></svg>
<div class="t c tb" style="left:152px">Video</div>
<svg class="a" style="left:526px;top:900px" width="22" height="24" viewBox="0 0 22 24" fill="none" stroke="#eee" stroke-width="1.300"><circle cx="7" cy="4.500" r="3"/><circle cx="16" cy="11" r="3.500"/><path d="M2 22v-6c0-3 2-5.500 5-5.500 1 0 2 .5 3 1M10 21.500v-1c0-3 2.500-4.500 6-4.500s5.500 1.500 5.500 4.500v1zM2 22h6"/></svg>
<div class="t" style="left:555px;top:909px;font-size:11px;color:#bbb">10</div>
<svg class="a" style="left:587px;top:905px" width="10" height="7" viewBox="0 0 10 7"><path d="M1 6 5 2l4 4" fill="none" stroke="#e2e2e2" stroke-width="1.600"/></svg>
<div class="t c tb" style="left:537px">Participants</div>
<svg class="a" style="left:640px;top:898px" width="26" height="26" viewBox="0 0 26 26" fill="none" stroke="#eee" stroke-width="1.300"><path d="M6 6V4.500C6 2.500 7.500 1 9.500 1H20c2.500 0 4 1.500 4 4v7c0 2-1 3-3 3.500"/><rect x="2" y="6" width="18" height="15" rx="6"/><path d="M8 21v4l4-4"/><circle cx="7" cy="13" r=".8" fill="#eee"/><circle cx="11" cy="13" r=".8" fill="#eee"/><circle cx="15" cy="13" r=".8" fill="#eee"/></svg>
<svg class="a" style="left:681px;top:905px" width="10" height="7" viewBox="0 0 10 7"><path d="M1 6 5 2l4 4" fill="none" stroke="#e2e2e2" stroke-width="1.600"/></svg>
<div class="t c tb" style="left:653px">Chat</div>
<svg class="a" style="left:728px;top:899px" width="26" height="23" viewBox="0 0 26 23" fill="none" stroke="#eee" stroke-width="1.400"><path d="M13 22C6 17 1 13 1 7.500 1 4 3.500 1.500 7 1.500c2.500 0 4.500 1.500 6 4 2-3 4-4 6.500-4 3 0 5.500 2 5.500 5.500 0 5.500-6 10.500-12 15z"/></svg>
<div class="t c tb" style="left:741px">React</div>
<svg class="a" style="left:821px;top:899px" width="26" height="22" viewBox="0 0 26 22"><rect width="26" height="22" rx="3" fill="#17e69a"/><path d="M13 4l6 7h-4v7h-4v-7H7z" fill="#06281c"/></svg>
<div class="t c tb" style="left:835px">Share</div>
<svg class="a" style="left:915px;top:898px" width="26" height="26" viewBox="0 0 26 26" fill="none" stroke="#eee" stroke-width="1.400"><circle cx="19.500" cy="5" r="4"/><circle cx="6.500" cy="20" r="4"/><path d="M12 1.500H7C4 1.500 2 3.500 2 6v6M24 14v6c0 2.500-2 4.500-5 4.500h-5"/></svg>
<div class="t c tb" style="left:928px">Apps</div>
<svg class="a" style="left:1006px;top:899px" width="28" height="23" viewBox="0 0 28 23" fill="none" stroke="#eee" stroke-width="1.400"><path d="M10 21H4c-2 0-3-1-3-3V4c0-2 1-3 3-3h20c2 0 3 1 3 3v14"/><rect x="12" y="17" width="15" height="5" rx="2.500" fill="#eee"/></svg>
<div class="t c tb" style="left:1020px">Whiteboards</div>
<svg class="a" style="left:1101px;top:897px" width="26" height="26" viewBox="0 0 26 26"><circle cx="13" cy="13" r="11.800" fill="none" stroke="#eee" stroke-width="1.400"/><circle cx="13" cy="13" r="5.500" fill="#eee"/></svg>
<div class="t c tb" style="left:1114px">Record</div>
<svg class="a" style="left:1185px;top:897px" width="26" height="26" viewBox="0 0 26 26"><circle cx="13" cy="13" r="11.800" fill="none" stroke="#eee" stroke-width="1.400"/><circle cx="8" cy="13" r="1.400" fill="#eee"/><circle cx="13" cy="13" r="1.400" fill="#eee"/><circle cx="18" cy="13" r="1.400" fill="#eee"/></svg>
<div class="t c tb" style="left:1198px">More</div>
<svg class="a" style="left:1536px;top:897px" width="28" height="28" viewBox="0 0 28 28" fill="none"><path d="M18 5 26 1V23L19 27" stroke="#e0234e" stroke-width="1.500" fill="#5a0d20"/><path d="M18 5H26" stroke="#e0234e" stroke-width="1.500"/><circle cx="13" cy="6" r="3" stroke="#eee" stroke-width="1.300"/><path d="M9 10h7l2 7-3 1 1 8h-3l-2-6-2 6H6l2-8-3-1z" stroke="#eee" stroke-width="1.300"/></svg>
<div class="t c tb" style="left:1550px">Leave</div>
<div class="a" style="left:8px;top:947px;width:878px;height:1px;background:#d8d8d8"></div>
</body></html>
